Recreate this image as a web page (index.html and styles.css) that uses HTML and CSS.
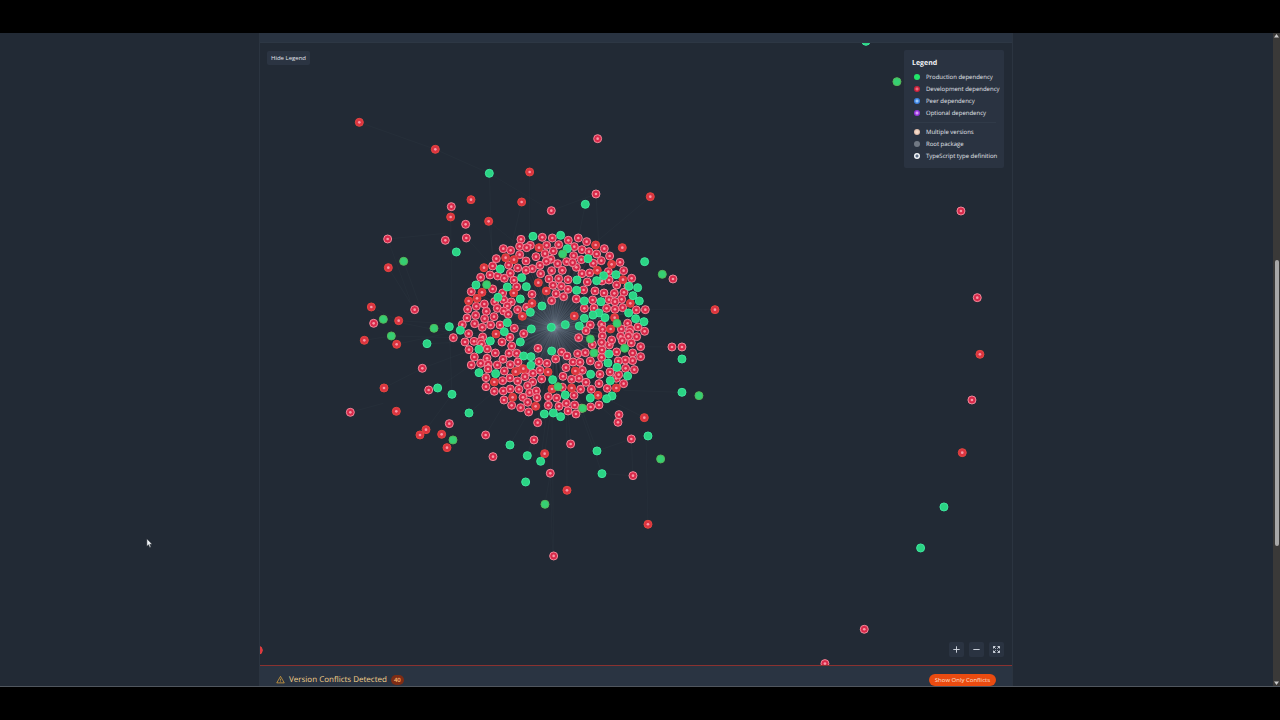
FILE: index.html
```html
<!DOCTYPE html>
<html lang="en">
<head>
    <meta charset="UTF-8">
    <meta name="viewport" content="width=device-width, initial-scale=1.0">
    <title>Dependency Graph</title>
    <link rel="stylesheet" href="styles.css">
</head>
<body>
    <div class="screen">
        <main class="page">
            <div class="card">
                <div class="card-top"></div>
                <div class="graph">
                    <svg class="graph-canvas" role="img" aria-label="Dependency graph">
                        <defs>
                            <radialGradient id="hubGlow">
                                <stop offset="0" stop-color="#8492a3" stop-opacity="0.3"/>
                                <stop offset="0.5" stop-color="#8492a3" stop-opacity="0.16"/>
                                <stop offset="1" stop-color="#8492a3" stop-opacity="0"/>
                            </radialGradient>
                        </defs>
                        <g transform="translate(80 57) scale(0.3333)">
                            <circle cx="642" cy="682" r="120" fill="url(#hubGlow)"/>
                            <g id="links"></g>
                            <g id="nodes"></g>
                        </g>
                    </svg>

                    <button type="button" class="legend-toggle">Hide Legend</button>

                    <div class="legend">
                        <h2>Legend</h2>
                        <ul>
                            <li><span class="dot prod"></span>Production dependency</li>
                            <li><span class="dot dev"></span>Development dependency</li>
                            <li><span class="dot peer"></span>Peer dependency</li>
                            <li><span class="dot optional"></span>Optional dependency</li>
                        </ul>
                        <ul class="legend-extra">
                            <li><span class="dot multiple"></span>Multiple versions</li>
                            <li><span class="dot root"></span>Root package</li>
                            <li><span class="dot types"></span>TypeScript type definition</li>
                        </ul>
                    </div>

                    <div class="zoom-controls">
                        <button type="button" aria-label="Zoom in">
                            <svg viewBox="0 0 15 15"><path d="M7.5 4.3v6.4M4.3 7.5h6.4"/></svg>
                        </button>
                        <button type="button" aria-label="Zoom out">
                            <svg viewBox="0 0 15 15"><path d="M4.3 7.5h6.4"/></svg>
                        </button>
                        <button type="button" aria-label="Fit to screen">
                            <svg viewBox="0 0 15 15"><path d="M4.5 6.5v-2h2M4.5 4.5l2.2 2.2M8.5 4.5h2v2M10.5 4.5L8.3 6.7M4.5 8.5v2h2M4.5 10.5l2.2-2.2M10.5 8.5v2h-2M10.5 10.5L8.3 8.3"/></svg>
                        </button>
                    </div>
                </div>

                <section class="conflicts">
                    <svg class="warning-icon" viewBox="0 0 24 24"><path d="M12 3.5L22 21H2z"/><path d="M12 10v5M12 17v1.5"/></svg>
                    <h2>Version Conflicts Detected</h2>
                    <span class="count">40</span>
                    <button type="button" class="conflicts-btn">Show Only Conflicts</button>
                </section>
            </div>
        </main>

        <div class="scrollbar">
            <svg viewBox="0 0 7 6"><path d="M3.5 1L6 4.5H1z"/></svg>
            <div class="track"><div class="thumb"></div></div>
            <svg viewBox="0 0 7 6"><path d="M3.5 5L6 1.5H1z"/></svg>
        </div>
    </div>

    <svg class="cursor" viewBox="0 0 10 14"><path d="M1 1v9.6l2.2-2 1.4 3.4 1.6-.7-1.4-3.3h3z"/></svg>

    <script src="graph.js"></script>
</body>
</html>
```

FILE: styles.css
```css
* {
    box-sizing: border-box;
}

body {
    font-family: "Open Sans", "Noto Sans", sans-serif;
    text-rendering: geometricPrecision;
    background-color: #000;
    color: #e2e6ec;
    margin: 0;
    padding: 33px 0;
    height: 100vh;
    font-size: 6px;
    line-height: 12px;
    overflow: hidden;
}

h2, ul {
    margin: 0;
    padding: 0;
}

button {
    font-family: inherit;
    font-size: 6px;
    line-height: 12px;
    padding: 0;
    border: none;
    cursor: pointer;
}

.screen {
    display: flex;
    height: 100%;
    background-color: #222a35;
    border-bottom: 1px solid #50565e;
}

.page {
    flex: 1;
    display: flex;
    justify-content: center;
    padding-right: 1px;
}

.card {
    width: 100%;
    max-width: 754px;
    display: flex;
    flex-direction: column;
    border-left: 1px solid #2b3440;
    border-right: 1px solid #2b3440;
}

.card-top {
    height: 9px;
    background-color: #293341;
}

/* Graph */
.graph {
    flex: 1;
    min-height: 0;
    position: relative;
    border-top: 1px solid #2d3744;
    background-color: #222a35;
}

.graph-canvas {
    display: block;
    width: 100%;
    height: 100%;
}

.link {
    stroke: #9aa7b8;
    stroke-width: 2;
    stroke-opacity: 0.09;
}

.link.outer {
    stroke-opacity: 0.06;
}

.node {
    stroke-width: 3;
}

.node.dev {
    fill: #d8294a;
    stroke: #f08a9b;
}

.node.dev-conflict {
    fill: #dc3341;
    stroke: #e2463d;
}

.node.prod {
    fill: #2bd484;
    stroke: #3ee69f;
}

.node.prod-conflict {
    fill: #36cf72;
    stroke: #55b557;
}

.core {
    fill: #f598a5;
}

.legend-toggle {
    position: absolute;
    top: 8px;
    left: 7px;
    padding: 1px 4px;
    background-color: #2b3442;
    color: #e2e6ec;
    border-radius: 2px;
}

.legend {
    position: absolute;
    top: 7px;
    right: 8px;
    width: 100px;
    padding: 8px 8px 6px;
    background-color: #2a3341;
    border-radius: 2px;
}

.legend h2 {
    font-size: 7px;
    font-weight: 700;
    line-height: 12px;
    margin-bottom: 1px;
    color: #f2f4f7;
}

.legend li {
    display: flex;
    align-items: center;
    gap: 6px;
    padding-left: 2px;
    white-space: nowrap;
}

.legend-extra {
    margin-top: 3px;
    padding-top: 3px;
    border-top: 1px solid #303a48;
}

.dot {
    flex: none;
    width: 6px;
    height: 6px;
    border-radius: 50%;
    background: #22e56a;
}

.dot.dev {
    background: radial-gradient(#f06a7c 1px, #c9213b 2px);
}

.dot.peer {
    background: radial-gradient(#9cc7f7 1px, #3b82e0 2px);
}

.dot.optional {
    background: radial-gradient(#d59af5 1px, #9333dc 2px);
}

.dot.multiple {
    background: radial-gradient(#f6dccb 1px, #d9b5a2 3px);
}

.dot.root {
    background: #717984;
}

.dot.types {
    background: radial-gradient(#5b6d85 1px, #f2f5f8 2px);
}

.zoom-controls {
    position: absolute;
    right: 8px;
    bottom: 8px;
    display: flex;
    gap: 5px;
}

.zoom-controls button {
    width: 15px;
    height: 15px;
    background-color: #2a3341;
    border-radius: 2px;
}

.zoom-controls svg {
    display: block;
    width: 15px;
    height: 15px;
    fill: none;
    stroke: #d8dee7;
    stroke-width: 0.9;
}

/* Conflicts */
.conflicts {
    display: flex;
    align-items: flex-start;
    flex: 0 0 21px;
    padding: 8px 16px 0;
    overflow: hidden;
    background-color: #2a3442;
    border-top: 1px solid #8a3230;
}

.conflicts h2 {
    font-size: 8px;
    font-weight: 500;
    color: #f5d08a;
    margin: 0 4px;
}

.warning-icon {
    width: 9px;
    height: 9px;
    margin-top: 1px;
    fill: none;
    stroke: #e0a63e;
    stroke-width: 2;
}

.count {
    padding: 0 3px;
    line-height: 10px;
    margin-top: 1px;
    border-radius: 5px;
    background-color: #7e2c14;
    color: #fdba74;
    font-weight: 600;
}

.conflicts-btn {
    margin-left: auto;
    padding: 0 6px;
    border-radius: 6px;
    background-color: #ea4b10;
    color: #fbe3d6;
    font-weight: 500;
}

/* Scrollbar */
.scrollbar {
    width: 7px;
    display: flex;
    flex-direction: column;
    background-color: #3a3938;
}

.scrollbar svg {
    width: 7px;
    height: 6px;
    fill: #c8c8c8;
}

.track {
    flex: 1;
    padding: 221px 1px 0 2px;
}

.thumb {
    height: 45%;
    min-height: 286px;
    border-radius: 2px;
    background-color: #a8a8a8;
}

.cursor {
    position: absolute;
    left: 146px;
    top: 538px;
    width: 8px;
    height: 11px;
    fill: #eef1f5;
    stroke: #20262e;
    stroke-width: 0.6;
}
```

FILE: graph.js
```js
// Node positions in graph units, grouped by node type
const nodes = {
    dev: `
        773,116 768,282 634,332 334,320 377,373 379,414 316,421 143,417 224,629 101,670
        247,805 266,870 31,937 328,971 437,1005 459,1070 593,968 582,1020 692,1032 631,1120
        641,1368 837,944 834,967 874,1017 879,1127 999,537 996,741 1026,741 1863,333 1912,593
        1896,900 1573,1588 1455,1691
        543,418 607,412 637,414 715,414 685,421 740,425 539,439 571,436 560,443 620,436
        656,434 703,440 793,446 490,446 512,451 726,449 747,455 770,462 809,468 640,453
        615,461 539,464 588,470 701,467 469,476 558,483 633,478 619,484 680,485 724,479
        653,491 709,502 840,487 784,482 760,490 458,498 506,495 533,504 600,496 577,506
        558,511 698,488 511,520 602,521 635,512 667,511 726,521 749,519 851,512 805,515
        422,532 450,525 473,528 493,535 522,541 875,535 627,537 656,536 684,539 742,546
        786,543 830,555 807,540 639,556 664,559 684,568 394,575 458,567 530,561 648,581
        671,590 731,570 765,573 864,559 852,577 792,579 823,580 576,583 488,579 635,602 709,597
        758,600 807,599 845,598 825,605 433,612 464,605 491,600 514,606 409,619 383,628
        439,634 472,625 502,618 560,622 533,629 733,625 762,624 800,625 825,628 848,623
        889,630 916,629 381,654 407,646 434,656 462,650 491,633 505,643 367,674 404,671
        427,682 452,675 480,675 523,685 386,701 340,713 551,701 751,675 785,673 863,670
        738,692 788,688 844,687 871,688 894,681 914,694 868,698 890,710 716,713 787,708
        842,709 865,709 428,711 375,726
        402,724 422,724 387,749 486,726 425,733 515,738 442,747 466,759 403,771 441,775
        507,760 530,760 489,778 394,795 422,790 445,793 472,795 511,794 534,786 493,813
        444,807 438,833 534,811 557,812 510,834 488,842 555,830 533,843 438,860 463,874
        490,873 511,867 537,868 578,846 563,857 579,820 605,837 597,785 600,811 621,790
        647,777 665,756 681,768 594,745 569,878 589,873 591,893 549,892 563,907 492,900
        515,916 542,923 566,936 625,890 650,894 625,916 657,919 684,933 708,942 679,910
        704,915 725,925 702,886 722,868 752,921 777,915 738,847 717,835 695,838 669,829
        678,803 667,862 754,868 777,851 802,865 851,851 829,835 780,823 810,816 836,824
        857,805 883,809 699,786 720,787 727,811 776,795 751,783 736,758 713,761 785,772
        786,750 757,734 808,735 830,756 847,722 878,759 902,770 902,740 874,729 878,782
        856,780 835,783 815,720 510,712 785,727`,
    'dev-conflict': `
        58,67 286,148 569,216 393,299 545,306 931,290 332,351 446,364 847,443 145,503
        94,621 176,662 73,721 170,733 132,864 169,934 258,989 240,1005 305,1003 321,1043
        614,1061 681,1171 913,953 924,1273 1125,629 1920,763 1867,1058 -245,1651
        597,443 767,435 497,473 522,479 432,503 815,493 772,511 595,548 849,539 619,573
        426,577 411,595 386,603 521,579 576,610 547,649 703,648 871,610 824,653 812,687
        468,702 527,815 550,806 463,846 518,892 587,919 624,816 636,867 695,864 706,813
        774,886 829,864`,
    prod: `
        448,220 736,313 349,456 914,485 328,680 261,731 293,864 336,883 387,939 510,1035
        562,1067 602,1084 557,1146 771,1053 786,1121 924,1008 1026,777 1026,877 1578,-176
        1812,1221 1742,1344
        579,409 662,406 682,446 744,476 481,507 545,533 408,555 502,561 559,560 711,540
        828,524 791,527 770,542 710,571 867,559 893,563 879,587 898,603 474,592 541,597
        733,603 783,605 606,618 571,637 866,639 887,656 912,665 777,639 759,645 795,653
        733,655 718,678 676,674 634,682 574,687 502,668 493,695 361,691
        451,723 417,748 541,726 551,768 573,770 573,796 417,818 467,821 635,753 638,839
        676,885 751,894 752,823 807,762 804,789 831,802 811,842 863,828 816,888 800,896
        613,942 640,939 662,950`,
    'prod-conflict': `
        191,484 967,523 130,658 282,685 154,708 339,1020 615,1213 962,1077 1077,887
        1671,-55 668,462 440,554 831,670 751,717 762,759 854,745 654,860 728,925`
};

// Links between outer packages: x1,y1,x2,y2
const outerLinks = `
    58,67,286,148 286,148,448,220 448,220,634,332 448,220,456,460 569,216,569,420
    545,306,510,460 931,290,770,425 736,313,715,414 768,282,776,430 634,332,768,282
    446,364,540,439 446,364,460,476 332,351,336,690 379,414,450,490 143,417,316,400
    145,503,224,629 191,484,240,620 143,417,210,600 176,662,367,674 130,658,340,700
    94,621,176,662 154,708,340,713 282,685,361,691 261,731,375,726 73,721,154,708
    170,733,367,690 328,680,336,883 247,805,394,750 132,864,247,805 31,937,130,910
    293,864,394,795 266,870,336,883 258,989,336,883 305,1003,328,971 387,939,463,874
    437,1005,500,900 510,1035,566,936 562,1067,600,940 602,1084,620,940 582,1020,593,968
    614,1061,630,950 631,1120,638,1368 615,1213,631,1120 681,1171,680,933 692,1032,684,933
    771,1053,725,925 786,1121,879,1127 786,1121,720,930 924,1273,918,1008 879,1127,874,1017
    834,967,777,915 874,1017,771,1053 1026,877,851,871 1125,629,916,629 996,741,902,740
    913,953,800,896 641,1368,636,940`;

const SVG_NS = 'http://www.w3.org/2000/svg';
const HUB = [642, 682];
const linkLayer = document.getElementById('links');
const nodeLayer = document.getElementById('nodes');

function parse(text) {
    return text.trim().split(/\s+/).map(item => item.split(',').map(Number));
}

function addLink([x1, y1, x2, y2], className) {
    const line = document.createElementNS(SVG_NS, 'line');
    line.setAttribute('x1', x1);
    line.setAttribute('y1', y1);
    line.setAttribute('x2', x2);
    line.setAttribute('y2', y2);
    line.setAttribute('class', className);
    linkLayer.appendChild(line);
}

function addCircle(x, y, r, className) {
    const circle = document.createElementNS(SVG_NS, 'circle');
    circle.setAttribute('cx', x);
    circle.setAttribute('cy', y);
    circle.setAttribute('r', r);
    circle.setAttribute('class', className);
    nodeLayer.appendChild(circle);
}

Object.keys(nodes).forEach(type => {
    parse(nodes[type]).forEach(([x, y]) => {
        // everything inside the ring is a direct dependency of the root
        if (Math.hypot(x - HUB[0], y - HUB[1]) < 310) {
            addLink([HUB[0], HUB[1], x, y], 'link');
        }
        addCircle(x, y, 12, 'node ' + type);
        if (type.startsWith('dev')) {
            addCircle(x, y, 4, 'core');
        }
    });
});

parse(outerLinks).forEach(link => addLink(link, 'link outer'));
```
